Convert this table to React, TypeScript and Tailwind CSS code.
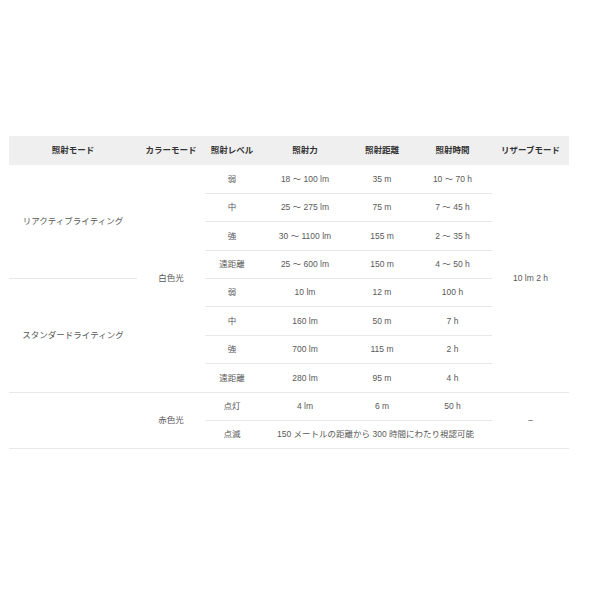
import React from "react";

type Row = {
  level: string;
  power: string;
  dist: string;
  time: string;
};

const reactive: Row[] = [
  { level: "弱", power: "18 ～ 100 lm", dist: "35 m", time: "10 ～ 70 h" },
  { level: "中", power: "25 ～ 275 lm", dist: "75 m", time: "7 ～ 45 h" },
  { level: "強", power: "30 ～ 1100 lm", dist: "155 m", time: "2 ～ 35 h" },
  { level: "遠距離", power: "25 ～ 600 lm", dist: "150 m", time: "4 ～ 50 h" },
];

const standard: Row[] = [
  { level: "弱", power: "10 lm", dist: "12 m", time: "100 h" },
  { level: "中", power: "160 lm", dist: "50 m", time: "7 h" },
  { level: "強", power: "700 lm", dist: "115 m", time: "2 h" },
  { level: "遠距離", power: "280 lm", dist: "95 m", time: "4 h" },
];

const cell = "h-[28.4px] p-0 text-center align-middle border-b border-[#e8e8e8]";
const span = "p-0 text-center align-middle border-b border-[#e8e8e8]";

function LevelCells({ row }: { row: Row }) {
  return (
    <>
      <td className={cell}>{row.level}</td>
      <td className={cell}>{row.power}</td>
      <td className={cell}>{row.dist}</td>
      <td className={cell}>{row.time}</td>
    </>
  );
}

export default function App() {
  return (
    <div className="min-h-[600px] bg-white pt-[136px] pl-[9px]">
      <table
        className="w-[560px] table-fixed border-collapse text-[8.5px] text-[#595959]"
        style={{ fontFamily: '"Liberation Sans", "Noto Sans CJK JP", sans-serif' }}
      >
        <colgroup>
          <col className="w-[128px]" />
          <col className="w-[68px]" />
          <col className="w-[54px]" />
          <col className="w-[92px]" />
          <col className="w-[62px]" />
          <col className="w-[79px]" />
          <col className="w-[77px]" />
        </colgroup>
        <thead>
          <tr className="bg-[#efefef] text-[#333]">
            {["照射モード", "カラーモード", "照射レベル", "照射力", "照射距離", "照射時間", "リザーブモード"].map((h) => (
              <th key={h} className="h-[29px] p-0 text-center align-middle font-bold">
                {h}
              </th>
            ))}
          </tr>
        </thead>
        <tbody>
          {reactive.map((row, i) => (
            <tr key={"r" + i}>
              {i === 0 && (
                <td rowSpan={4} className={span}>
                  リアクティブライティング
                </td>
              )}
              {i === 0 && (
                <td rowSpan={8} className={span}>
                  白色光
                </td>
              )}
              <LevelCells row={row} />
              {i === 0 && (
                <td rowSpan={8} className={span}>
                  10 lm 2 h
                </td>
              )}
            </tr>
          ))}
          {standard.map((row, i) => (
            <tr key={"s" + i}>
              {i === 0 && (
                <td rowSpan={4} className={span}>
                  スタンダードライティング
                </td>
              )}
              <LevelCells row={row} />
            </tr>
          ))}
          <tr>
            <td rowSpan={2} className={span} />
            <td rowSpan={2} className={span}>
              赤色光
            </td>
            <td className={cell}>点灯</td>
            <td className={cell}>4 lm</td>
            <td className={cell}>6 m</td>
            <td className={cell}>50 h</td>
            <td rowSpan={2} className={span}>
              –
            </td>
          </tr>
          <tr>
            <td className={cell}>点滅</td>
            <td colSpan={3} className={cell}>
              150 メートルの距離から 300 時間にわたり視認可能
            </td>
          </tr>
        </tbody>
      </table>
    </div>
  );
}
